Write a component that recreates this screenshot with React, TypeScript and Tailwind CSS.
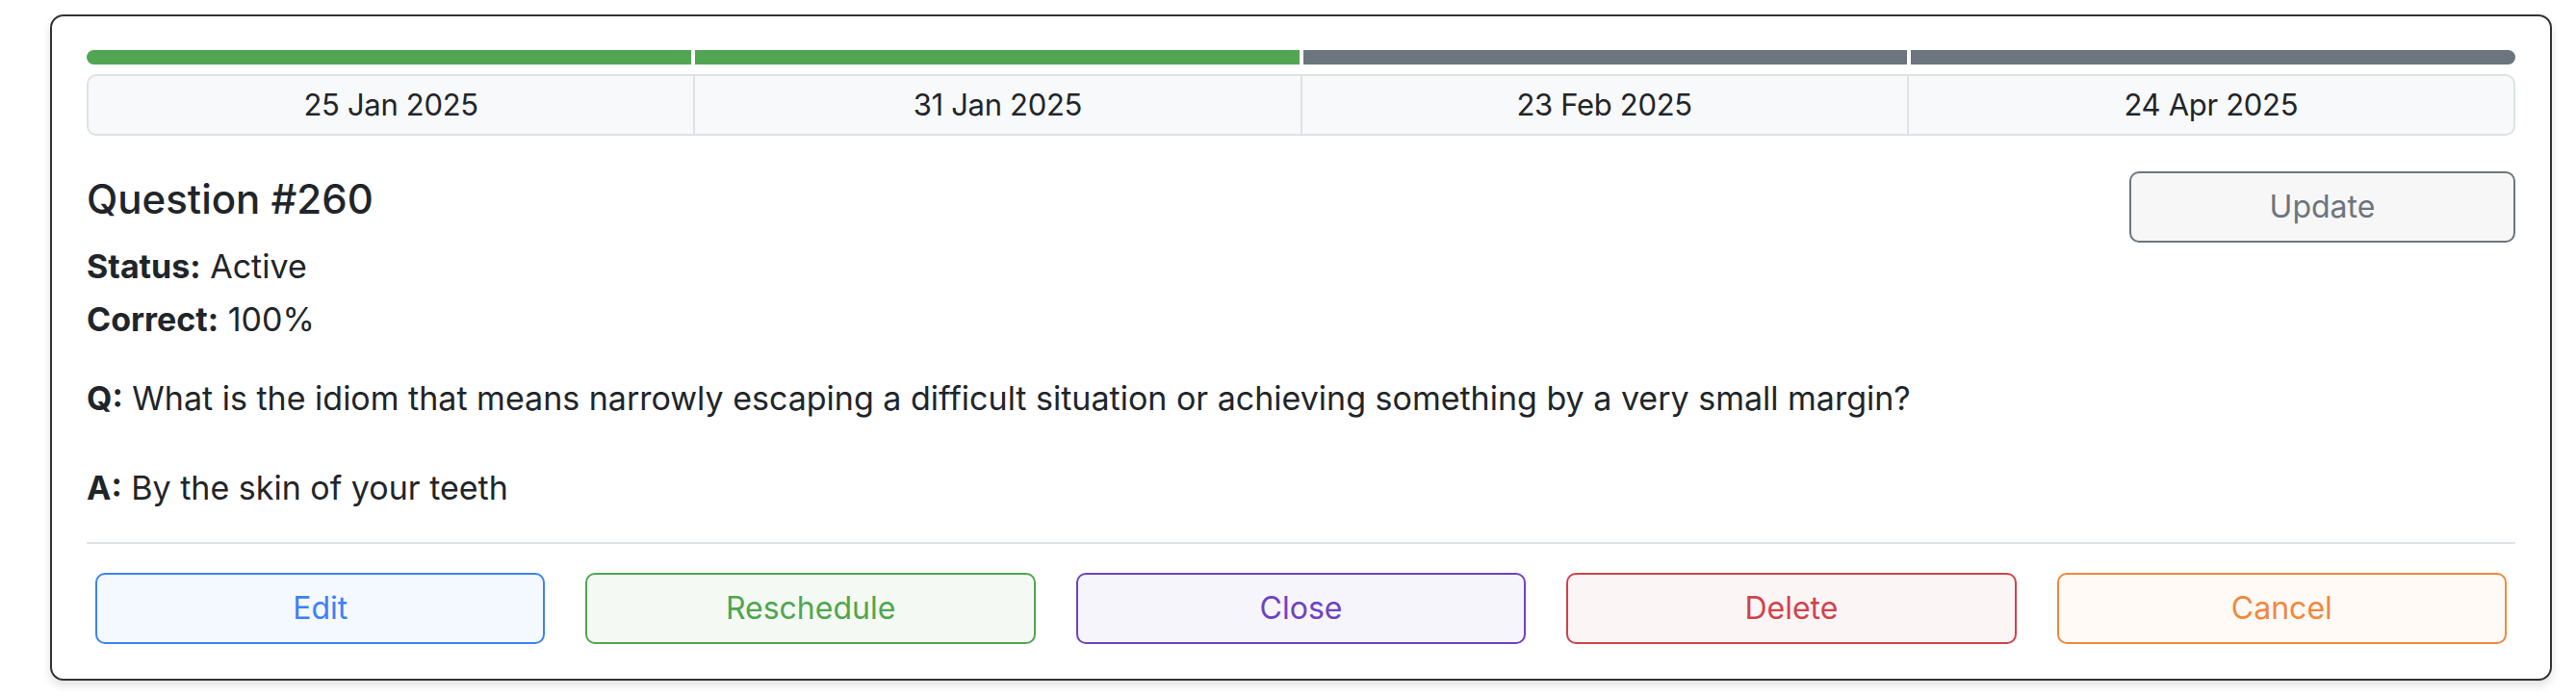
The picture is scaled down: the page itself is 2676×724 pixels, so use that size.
import React from 'react';

const segments = [
  { date: '25 Jan 2025', done: true },
  { date: '31 Jan 2025', done: true },
  { date: '23 Feb 2025', done: false },
  { date: '24 Apr 2025', done: false },
];

const actions = [
  { label: 'Edit', cls: 'border-[#3b82f6] bg-[#f4f8ff] text-[#3b82f6]' },
  { label: 'Reschedule', cls: 'border-[#4fa64f] bg-[#f4f9f4] text-[#4fa64f]' },
  { label: 'Close', cls: 'border-[#6f42c1] bg-[#f6f5fc] text-[#6f42c1]' },
  { label: 'Delete', cls: 'border-[#d0434a] bg-[#fcf5f5] text-[#d0434a]' },
  { label: 'Cancel', cls: 'border-[#f0883c] bg-[#fffaf6] text-[#f0883c]' },
];

const App = () => {
  return (
    <div className="min-h-screen bg-white pt-[15px] pl-[52px] text-[#212529] font-['Inter','Noto_Sans',sans-serif]">
      <div className="w-[2599px] rounded-[14px] border-2 border-[#333] bg-white px-[36px] pt-[35px] pb-[36px] shadow-[0_5px_10px_rgba(0,0,0,0.12)]">
        {/* progress */}
        <div className="flex h-[15px] gap-[4px]">
          {segments.map((s, i) => (
            <div
              key={s.date}
              className={
                'flex-1 ' +
                (s.done ? 'bg-[#52a552]' : 'bg-[#6c757d]') +
                (i === 0 ? ' rounded-l-[8px]' : '') +
                (i === segments.length - 1 ? ' rounded-r-[8px]' : '')
              }
            />
          ))}
        </div>

        <div className="mt-[10px] flex h-[64px] overflow-hidden rounded-[10px] border-2 border-[#dee2e6] bg-[#f8f9fa]">
          {segments.map((s, i) => (
            <div
              key={s.date}
              className={
                'flex flex-1 items-center justify-center text-[31px] tracking-[-0.01em]' +
                (i > 0 ? ' border-l-2 border-[#dee2e6]' : '')
              }
            >
              {s.date}
            </div>
          ))}
        </div>

        <div className="mt-[36px] flex items-start justify-between">
          <div>
            <h4 className="mt-[5px] text-[42px] font-medium leading-[1.2]">Question #260</h4>
            <div className="mt-[21px] text-[34px] leading-[48px]">
              <div className="mb-[7px]">
                <span className="font-bold">Status:</span> Active
              </div>
              <div>
                <span className="font-bold">Correct:</span> 100%
              </div>
            </div>
          </div>
          <button className="mt-[1px] h-[74px] w-[401px] rounded-[10px] border-2 border-[#6c757d] bg-[#f7f7f7] text-[32px] text-[#6c757d]">
            Update
          </button>
        </div>

        <p className="mt-[34px] text-[34px] leading-[48px]">
          <span className="font-bold">Q:</span> What is the idiom that means narrowly escaping a difficult situation or achieving something by a very small margin?
        </p>
        <p className="mt-[45px] text-[34px] leading-[48px]">
          <span className="font-bold">A:</span> By the skin of your teeth
        </p>

        <div className="mt-[32px] h-[2px] bg-[#dee2e6]" />

        <div className="mt-[30px] flex gap-[42px] px-[9px]">
          {actions.map((a) => (
            <button
              key={a.label}
              className={'h-[74px] flex-1 rounded-[10px] border-2 text-[32px] ' + a.cls}
            >
              {a.label}
            </button>
          ))}
        </div>
      </div>
    </div>
  );
};

export default App;
